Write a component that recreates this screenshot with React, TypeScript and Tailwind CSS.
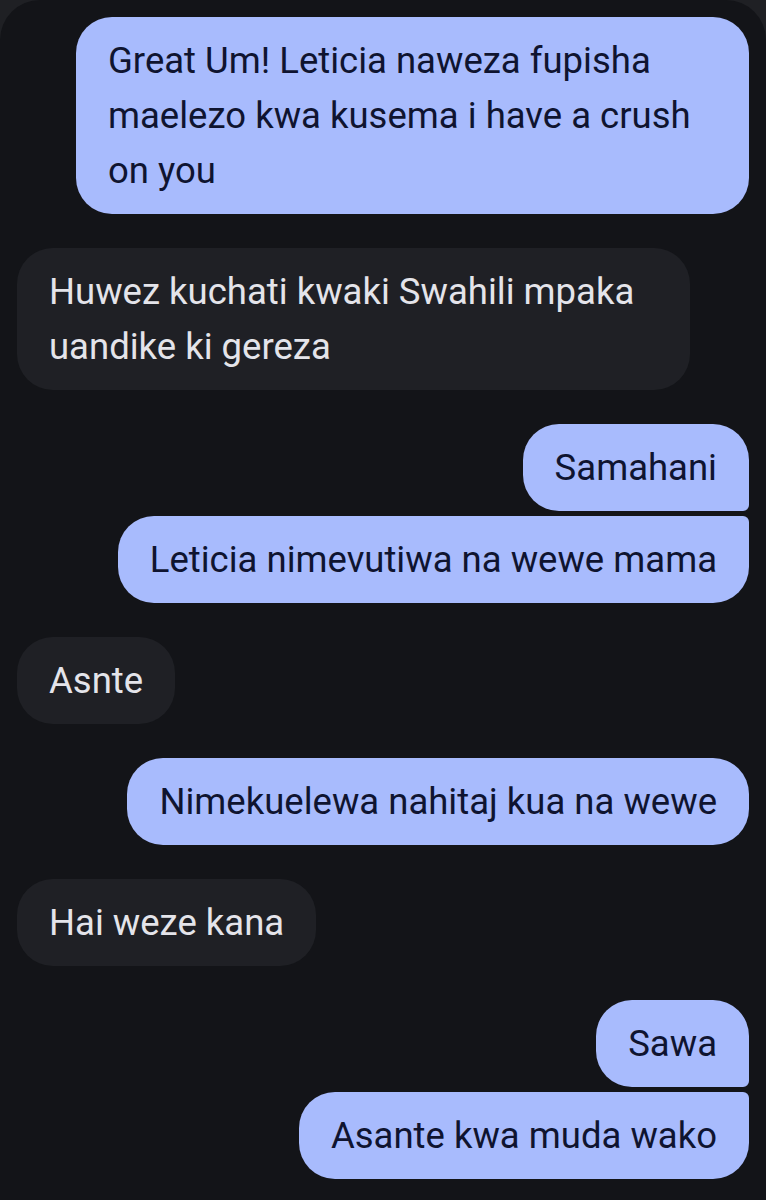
import React from 'react'
import clsx from 'clsx'

type Msg = { text: string; sent: boolean; tail?: 'top' | 'bottom' }

const groups: Msg[][] = [
  [{ text: 'Great Um! Leticia naweza fupisha maelezo kwa kusema i have a crush on you', sent: true }],
  [{ text: 'Huwez kuchati kwaki Swahili mpaka uandike ki gereza', sent: false }],
  [
    { text: 'Samahani', sent: true, tail: 'bottom' },
    { text: 'Leticia nimevutiwa na wewe mama', sent: true, tail: 'top' },
  ],
  [{ text: 'Asnte', sent: false }],
  [{ text: 'Nimekuelewa nahitaj kua na wewe', sent: true }],
  [{ text: 'Hai weze kana', sent: false }],
  [
    { text: 'Sawa', sent: true, tail: 'bottom' },
    { text: 'Asante kwa muda wako', sent: true, tail: 'top' },
  ],
]

const Bubble: React.FC<{ msg: Msg }> = ({ msg }) => (
  <div
    className={clsx(
      'max-w-[673px] rounded-[36px] px-8 py-4 text-[36.5px] leading-[55px]',
      msg.sent ? 'self-end bg-[#a8bbfd] text-[#0f1430]' : 'self-start bg-[#1f2025] text-[#e4e4ea]',
      msg.tail === 'bottom' && 'rounded-br-[6px]',
      msg.tail === 'top' && 'rounded-tr-[6px]'
    )}
  >
    {msg.text}
  </div>
)

export default function App() {
  return (
    <div className="bg-[#1f2024] w-[766px] h-[1200px] overflow-hidden" style={{ fontFamily: 'Roboto, "Noto Sans", sans-serif' }}>
      <div className="h-full rounded-t-[40px] bg-[#131418] px-[17px] pt-[17px] flex flex-col gap-[34px]">
        {groups.map((g, i) => (
          <div key={i} className="flex flex-col gap-[5px]">
            {g.map((m, j) => (
              <Bubble key={j} msg={m} />
            ))}
          </div>
        ))}
      </div>
    </div>
  )
}
